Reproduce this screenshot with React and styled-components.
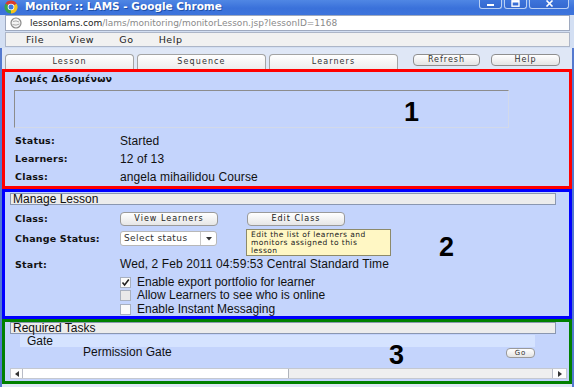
import React from 'react';
import styled, { createGlobalStyle } from 'styled-components';

const GlobalStyle = createGlobalStyle`
  html, body { margin: 0; padding: 0; }
  body {
    width: 574px; height: 387px; overflow: hidden; background: #e8eef9;
    font-family: "Liberation Sans", Arial, sans-serif;
  }
  * { box-sizing: border-box; }
`;

const Window = styled.div`
  width: 574px; height: 387px; display: flex; flex-direction: column; overflow: hidden;
  background: #e8eef9;
`;

const TitleBar = styled.div`
  height: 15px; flex: none; display: flex; align-items: flex-start;
  padding: 0 5px 0 4px;
  background: linear-gradient(180deg, #5087e4 0%, #3a71da 55%, #3d74dc 100%);
`;

const TitleText = styled.div`
  margin-left: 7px; color: #fff;
  font: bold 10.5px/13px "DejaVu Sans", sans-serif;
  text-shadow: 1px 1px 0 #1e4ea6;
  white-space: nowrap;
`;

const WinControls = styled.div`
  margin-left: auto; display: flex; gap: 2px;
`;

const WinBtn = styled.div`
  width: ${p => p.$w}px; height: 10px; margin-top: -1px;
  border: 1px solid #b9cff3; border-top: none; border-radius: 0 0 3px 3px;
  background: linear-gradient(#3f76dc, #3468d0);
  display: flex; align-items: center; justify-content: center;
`;

const Toolbar = styled.div`
  flex: none; height: 33px; display: flex; flex-direction: column; gap: 1px;
  padding: 0 4px 1px 5px; background: #d3dff3;
`;

const AddressBar = styled.div`
  height: 16px; display: flex; align-items: center; padding-left: 4px;
  background: #fff; border: 1px solid #9ea9bf;
`;

const Url = styled.div`
  margin-left: 8px; font: 9px/14px "DejaVu Sans", sans-serif; color: #8a8a8a; white-space: nowrap;
`;

const Host = styled.span`
  color: #222;
`;

const MenuBar = styled.div`
  height: 15px; display: flex; align-items: center; gap: 25px; padding-left: 20px;
  background: #f1f1f1; border: 1px solid #adb6c8;
  font: 9.5px/13px "DejaVu Sans", sans-serif; letter-spacing: 0.6px; color: #222;
`;

const Page = styled.div`
  flex: 1; display: flex; flex-direction: column;
  background: #dfe7f6; border-left: 2px solid #5479cf; border-right: 2px solid #5479cf;
`;

const TabRow = styled.div`
  flex: none; height: 21px; display: flex; align-items: flex-start;
  padding: 6px 0 0 3px; gap: 3px;
`;

const Tab = styled.div`
  width: 129px; height: 15px; border: 1px solid #a3a3a3; border-bottom: none;
  border-radius: 4px 4px 0 0; background: linear-gradient(#ffffff, #ececec);
  font: 8px/14px "DejaVu Sans", sans-serif; letter-spacing: 1.1px; color: #333;
  text-align: center;
`;

const ActionButton = styled.div`
  width: ${p => p.$w}px; height: 12px; margin-left: ${p => p.$ml}px;
  border: 1px solid #8e8e8e; border-radius: 4px; background: linear-gradient(#ffffff, #e4e4e4);
  font: 8px/10px "DejaVu Sans", sans-serif; letter-spacing: 1px; color: #333; text-align: center;
`;

const Section = styled.section`
  position: relative; flex: none; height: ${p => p.$h}px;
  border: 3px solid ${p => p.$color}; background: #c4d4fc;
  display: flex; flex-direction: column;
`;

const SectionTitle = styled.div`
  padding: 1px 0 0 10px; font: bold 9.5px/12px "DejaVu Sans", sans-serif; letter-spacing: 0.2px; color: #111;
`;

const DescBox = styled.div`
  margin: 5px 0 0 9px; width: 495px; height: 42px;
  border: 1px solid; border-color: #8c8c8c #d2d9ea #d2d9ea #8c8c8c;
`;

const InfoGrid = styled.div`
  margin-top: 4px; padding-left: 10px; display: grid;
  grid-template-columns: 105px 1fr; grid-auto-rows: 18px; align-items: center;
`;

const Label = styled.div`
  font: bold 9.5px/12px "DejaVu Sans", sans-serif; letter-spacing: 0.2px; color: #111;
`;

const Value = styled.div`
  font: 12px/13px "Liberation Sans", Arial, sans-serif; letter-spacing: 0.1px; color: #111; white-space: nowrap;
`;

const HeaderBar = styled.div`
  flex: none; margin: ${p => p.$mt || 0}px 13px 0 5px; height: 12px; padding-left: 2px;
  border: 1px solid #8a97b0; background: #ececec;
  font: 12px/10px "Liberation Sans", Arial, sans-serif; color: #111;
`;

const FieldRow = styled.div`
  display: grid; grid-template-columns: 105px 1fr; align-items: center;
  height: 16px; margin-top: ${p => p.$mt}px; padding-left: 10px;
`;

const ButtonGroup = styled.div`
  display: flex; gap: 29px; align-items: center;
`;

const SmallButton = styled.div`
  width: ${p => p.$w}px; height: 14px;
  border: 1px solid #9a9a9a; border-radius: 4px; background: linear-gradient(#ffffff, #e6e6e6);
  font: 8px/12px "DejaVu Sans", sans-serif; letter-spacing: 1px;
  color: #222; text-align: center; white-space: nowrap;
`;

const TipWrap = styled.div`
  position: relative;
`;

const Tooltip = styled.div`
  position: absolute; top: 17px; left: -1px; width: 145px; height: 27px; z-index: 2;
  padding: 1px 4px; border: 1px solid #8d8a6a; background: #fff7c4;
  font: 7.5px/8px "DejaVu Sans", sans-serif; letter-spacing: 0.45px; color: #222;
`;

const Select = styled.div`
  width: 97px; height: 15px; display: flex; border: 1px solid #b8b8b8; border-radius: 3px; background: #fff;
`;

const SelectText = styled.div`
  flex: 1; padding-left: 3px; font: 9px/13px "DejaVu Sans", sans-serif; letter-spacing: 0.4px; color: #333;
  border-right: 1px solid #c8c8c8; white-space: nowrap; overflow: hidden;
`;

const SelectArrow = styled.div`
  width: 15px; display: flex; align-items: center; justify-content: center;
`;

const CheckList = styled.div`
  margin-top: 4px; padding-left: 115px; display: grid; grid-auto-rows: 13.5px;
`;

const CheckRow = styled.label`
  display: flex; align-items: center; gap: 6px;
  font: 12px/13px "Liberation Sans", Arial, sans-serif; color: #111; white-space: nowrap;
`;

const CheckBox = styled.span`
  width: 11px; height: 11px; flex: none; display: flex; align-items: center; justify-content: center;
  border: 1px solid #a8b0bf; background: ${p => p.$grey ? '#e9e9e9' : '#fafafa'};
`;

const GateRow = styled.div`
  flex: none; margin: 1px 34px 0 15px; height: 12px; padding-left: 7px; background: #d5e3ff;
  font: 12px/12px "Liberation Sans", Arial, sans-serif; color: #111;
`;

const TaskRow = styled.div`
  flex: none; display: flex; align-items: center; height: 11px; margin-right: 34px; padding-left: 78px;
  font: 12px/11px "Liberation Sans", Arial, sans-serif; color: #111;
`;

const GoButton = styled.div`
  margin-left: auto; width: 29px; height: 10px; border: 1px solid #9a9a9a; border-radius: 4px;
  background: linear-gradient(#ffffff, #e4e4e4);
  font: 7px/8px "DejaVu Sans", sans-serif; letter-spacing: 1px; color: #333; text-align: center;
`;

const ScrollBar = styled.div`
  flex: none; margin: auto 2px 2px 5px; height: 11px; display: flex; background: #efefef;
  border: 1px solid #c4c8d0;
`;

const ScrollBtn = styled.div`
  width: ${p => p.$w}px; flex: none; display: flex; align-items: center; justify-content: center;
  background: #fdfdfd; border-left: ${p => p.$right ? '1px solid #b8bcc6' : 'none'};
  border-right: ${p => p.$right ? 'none' : '1px solid #b8bcc6'};
`;

const ScrollThumb = styled.div`
  width: 266px; flex: none; background: #fff; border-right: 1px solid #b0b4bc;
`;

const ScrollTrack = styled.div`
  flex: 1;
`;

const BigNumber = styled.div`
  position: absolute; left: ${p => p.$x}px; top: ${p => p.$y}px;
  font: bold 27px/27px "Liberation Sans", Arial, sans-serif; color: #000;
`;

const ChromeLogo = () => (
  <svg width="14" height="14" viewBox="0 0 14 14" style={{ flex: 'none' }}>
    <path d="M7 7 L1.37 3.75 A6.5 6.5 0 0 1 12.63 3.75 Z" fill="#db3a2c" />
    <path d="M7 7 L12.63 3.75 A6.5 6.5 0 0 1 7 13.5 Z" fill="#f6c31c" />
    <path d="M7 7 L7 13.5 A6.5 6.5 0 0 1 1.37 3.75 Z" fill="#3aa34b" />
    <circle cx="7" cy="7" r="3.3" fill="#fff" />
    <circle cx="7" cy="7" r="2.5" fill="#3b78e0" />
  </svg>
);

const Globe = () => (
  <svg width="12" height="12" viewBox="0 0 12 12" style={{ flex: 'none' }}>
    <circle cx="6" cy="6" r="5" fill="#f4f4f4" stroke="#8a8a8a" strokeWidth="1.2" />
    <path d="M3 4.5 Q6 3 9 5 M2.5 7.5 Q6 9 9.5 7" stroke="#a0a0a0" strokeWidth="0.9" fill="none" />
  </svg>
);

const Check = () => (
  <svg width="9" height="9" viewBox="0 0 9 9">
    <path d="M1.5 4.5 L3.6 7 L7.8 1.6" stroke="#222" strokeWidth="1.6" fill="none" />
  </svg>
);

const Tri = ({ dir }) => {
  const d = dir === 'down' ? 'M0 0 L6 0 L3 3.5 Z' : dir === 'left' ? 'M4 0 L4 6 L0 3 Z' : 'M0 0 L0 6 L4 3 Z';
  const w = dir === 'down' ? 6 : 4;
  const h = dir === 'down' ? 4 : 6;
  return (
    <svg width={w} height={h} viewBox={`0 0 ${w} ${h}`}>
      <path d={d} fill="#333" />
    </svg>
  );
};

const menuItems = ['File', 'View', 'Go', 'Help'];
const tabs = ['Lesson', 'Sequence', 'Learners'];
const info = [
  ['Status:', 'Started'],
  ['Learners:', '12 of 13'],
  ['Class:', 'angela mihailidou Course'],
];
const checks = [
  { label: 'Enable export portfolio for learner', checked: true },
  { label: 'Allow Learners to see who is online', grey: true },
  { label: 'Enable Instant Messaging' },
];

export default function App() {
  return (
    <>
      <GlobalStyle />
      <Window>
        <TitleBar>
          <ChromeLogo />
          <TitleText>Monitor :: LAMS - Google Chrome</TitleText>
          <WinControls>
            <WinBtn $w={23}>
              <svg width="9" height="7" viewBox="0 0 9 7"><rect x="1" y="4" width="7" height="2" fill="#fff" /></svg>
            </WinBtn>
            <WinBtn $w={23}>
              <svg width="9" height="7" viewBox="0 0 9 7"><rect x="1" y="0.8" width="7" height="5.4" fill="none" stroke="#fff" strokeWidth="1.4" /><rect x="1" y="0.5" width="7" height="2" fill="#fff" /></svg>
            </WinBtn>
            <WinBtn $w={40}>
              <svg width="9" height="7" viewBox="0 0 9 7"><path d="M1.5 0.5 L7.5 6.5 M7.5 0.5 L1.5 6.5" stroke="#fff" strokeWidth="1.6" /></svg>
            </WinBtn>
          </WinControls>
        </TitleBar>

        <Toolbar>
          <AddressBar>
            <Globe />
            <Url><Host>lessonlams.com</Host>/lams/monitoring/monitorLesson.jsp?lessonID=1168</Url>
          </AddressBar>
          <MenuBar>
            {menuItems.map(m => <span key={m}>{m}</span>)}
          </MenuBar>
        </Toolbar>

        <Page>
          <TabRow>
            {tabs.map(t => <Tab key={t}>{t}</Tab>)}
            <ActionButton $w={67} $ml={12}>Refresh</ActionButton>
            <ActionButton $w={69} $ml={8}>Help</ActionButton>
          </TabRow>

          <Section $color="#ff0000" $h={120}>
            <SectionTitle>Δομές Δεδομένων</SectionTitle>
            <DescBox />
            <InfoGrid>
              {info.map(([l, v]) => (
                <React.Fragment key={l}>
                  <Label>{l}</Label>
                  <Value>{v}</Value>
                </React.Fragment>
              ))}
            </InfoGrid>
            <BigNumber $x={399} $y={27}>1</BigNumber>
          </Section>

          <Section $color="#0000ff" $h={130}>
            <HeaderBar $mt={1}>Manage Lesson</HeaderBar>
            <FieldRow $mt={7}>
              <Label>Class:</Label>
              <ButtonGroup>
                <SmallButton $w={98}>View Learners</SmallButton>
                <TipWrap>
                  <SmallButton $w={98}>Edit Class</SmallButton>
                  <Tooltip>Edit the list of learners and monitors assigned to this lesson</Tooltip>
                </TipWrap>
              </ButtonGroup>
            </FieldRow>
            <FieldRow $mt={5}>
              <Label>Change Status:</Label>
              <Select>
                <SelectText>Select status</SelectText>
                <SelectArrow><Tri dir="down" /></SelectArrow>
              </Select>
            </FieldRow>
            <FieldRow $mt={12}>
              <Label>Start:</Label>
              <Value>Wed, 2 Feb 2011 04:59:53 Central Standard Time</Value>
            </FieldRow>
            <CheckList>
              {checks.map(c => (
                <CheckRow key={c.label}>
                  <CheckBox $grey={c.grey}>{c.checked && <Check />}</CheckBox>
                  {c.label}
                </CheckRow>
              ))}
            </CheckList>
            <BigNumber $x={434} $y={42}>2</BigNumber>
          </Section>

          <Section $color="#008000" $h={65}>
            <HeaderBar>Required Tasks</HeaderBar>
            <GateRow>Gate</GateRow>
            <TaskRow>
              Permission Gate
              <GoButton>Go</GoButton>
            </TaskRow>
            <ScrollBar>
              <ScrollBtn $w={12}><Tri dir="left" /></ScrollBtn>
              <ScrollThumb />
              <ScrollTrack />
              <ScrollBtn $w={14} $right><Tri dir="right" /></ScrollBtn>
            </ScrollBar>
            <BigNumber $x={384} $y={20}>3</BigNumber>
          </Section>
        </Page>
      </Window>
    </>
  );
}
